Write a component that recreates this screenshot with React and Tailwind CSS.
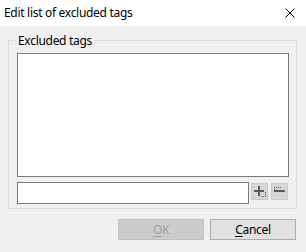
import React from "react";

const font = { fontFamily: '"Segoe UI", "Noto Sans", "Liberation Sans", sans-serif' };

function PlusIcon() {
  return (
    <svg width="15" height="15" viewBox="0 0 15 15" shapeRendering="crispEdges">
      <rect x="6" y="2" width="2" height="10" fill="#5a5a5a" />
      <rect x="2" y="6" width="10" height="2" fill="#5a5a5a" />
      <path d="M9 12h1M11 12h1M13 12h1M13 10h1M13 8h1" stroke="#5a5a5a" strokeWidth="1" fill="none" transform="translate(0,0.5)" />
    </svg>
  );
}

function MinusIcon() {
  return (
    <svg width="15" height="15" viewBox="0 0 15 15" shapeRendering="crispEdges">
      <path d="M2 3h1M4 3h1M6 3h1M8 3h1M2 5h1" stroke="#5a5a5a" strokeWidth="1" fill="none" transform="translate(0,0.5)" />
      <rect x="2" y="6" width="11" height="2" fill="#5a5a5a" />
    </svg>
  );
}

export default function App() {
  return (
    <div className="w-[306px] h-[252px] bg-[#f0f0f0] flex flex-col text-[12px] tracking-[-0.3px] text-black" style={font}>
      <div className="h-[26px] bg-white flex items-center justify-between pl-[4px] pr-[11px]">
        <span className="leading-[16px]">Edit list of excluded tags</span>
        <svg width="10" height="10" viewBox="0 0 10 10">
          <path d="M0.5 0.5L9.5 9.5M9.5 0.5L0.5 9.5" stroke="#000" strokeWidth="1" />
        </svg>
      </div>

      <div className="flex flex-col px-[8px] pt-[7px]">
        <fieldset className="w-[289px] border border-[#dcdcdc] pl-[8px] pr-[7px] pt-[5px] pb-[4px]">
          <legend className="-ml-px px-[2px] leading-[15px]">Excluded tags</legend>
          <div className="h-[124px] bg-white border border-[#7a7a7a]" />
          <div className="flex items-start mt-[5px]">
            <input className="w-[232px] h-[22px] bg-white border border-[#7a7a7a] outline-none" />
            <button className="ml-[2px] mt-px w-[17px] h-[17px] bg-[#d6d6d6] border border-[#cacaca] flex items-center justify-center">
              <PlusIcon />
            </button>
            <button className="ml-[3px] mt-px w-[17px] h-[17px] bg-[#d6d6d6] border border-[#cacaca] flex items-center justify-center">
              <MinusIcon />
            </button>
          </div>
        </fieldset>

        <div className="flex justify-end gap-[6px] mt-[10px] pr-px w-[289px]">
          <button disabled className="w-[86px] h-[21px] bg-[#cccccc] border border-[#bfbfbf] text-[#a0a0a0] leading-[19px]">
            <span className="underline underline-offset-2">O</span>K
          </button>
          <button className="w-[86px] h-[21px] bg-[#e1e1e1] border border-[#adadad] leading-[19px]">
            <span className="underline underline-offset-2">C</span>ancel
          </button>
        </div>
      </div>
    </div>
  );
}
